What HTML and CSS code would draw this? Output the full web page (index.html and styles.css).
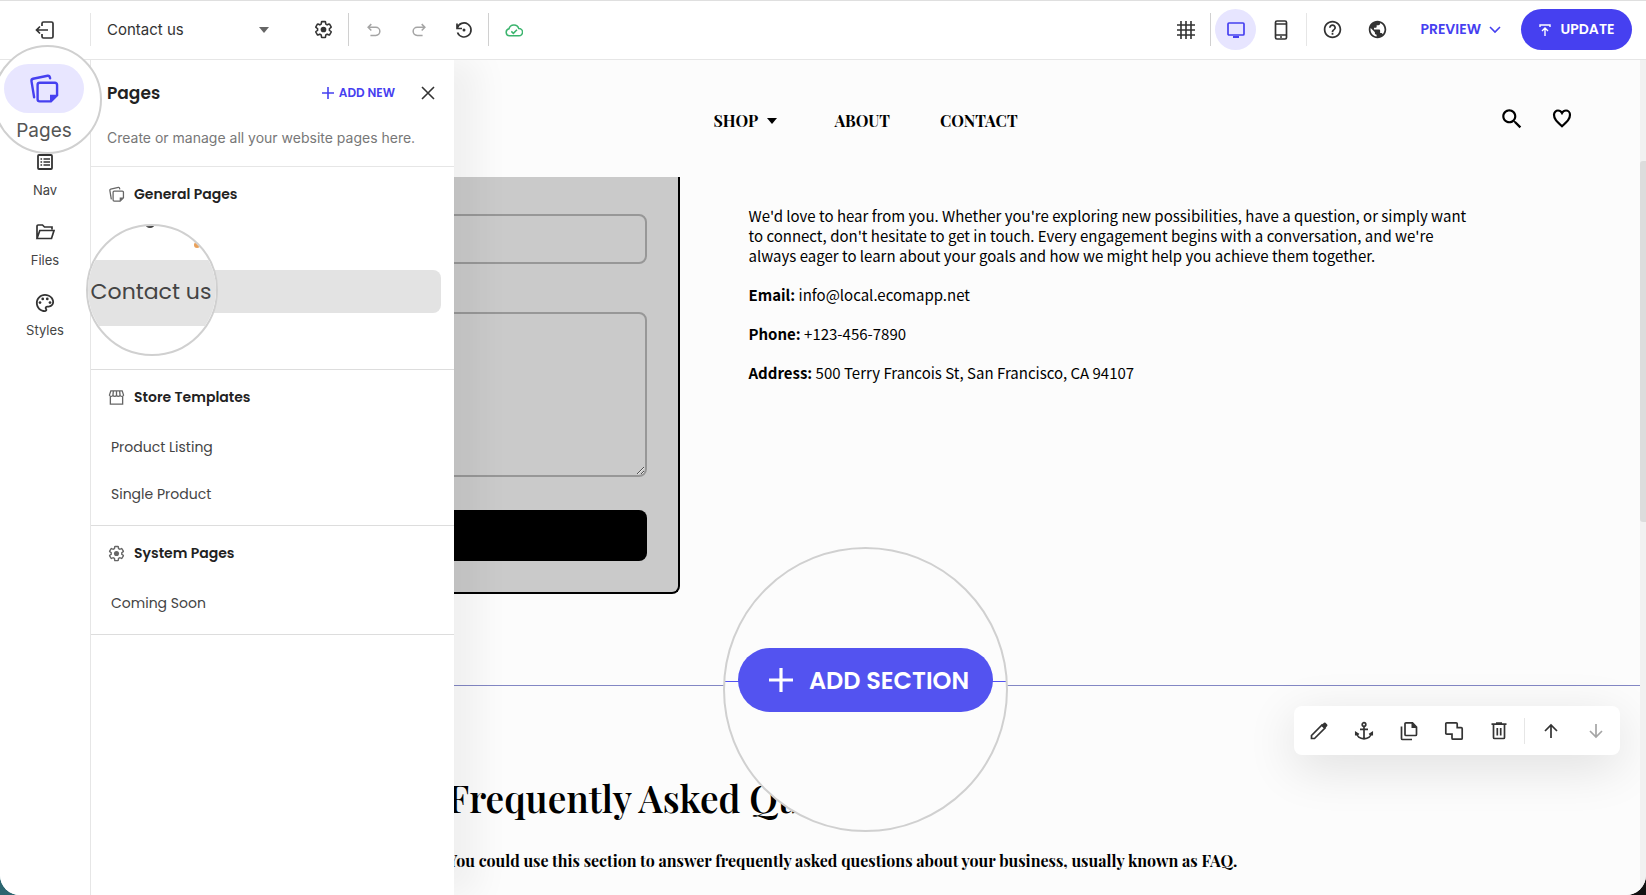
FILE: index.html
```html
<!DOCTYPE html>
<html lang="en">
<head>
  <meta charset="UTF-8" />
  <meta name="viewport" content="width=device-width, initial-scale=1.0"/>
  <title>Website editor</title>
  <link rel="stylesheet" href="styles.css">
</head>
<body>

  <!-- Shared icons -->
  <svg class="sprite" aria-hidden="true">
    <symbol id="i-pages" viewBox="0 0 24 24">
      <path d="M4.600 18.200L2.600 6.100Q2.400 4.700 3.800 4.300L14.700 2.100Q16.200 1.900 16.600 3.900" fill="none" stroke="currentColor" stroke-width="1.800" stroke-linecap="round"/>
      <path d="M8.800 7.300h11.400a1.600 1.600 0 0 1 1.600 1.600v7.800l-4.600 4.600H8.800a1.600 1.600 0 0 1-1.600-1.600V8.900a1.600 1.600 0 0 1 1.600-1.600z" fill="none" stroke="currentColor" stroke-width="1.800"/>
      <path d="M16.500 22v-5.700h5.900z" fill="currentColor"/>
    </symbol>
    <symbol id="i-gear" viewBox="0 0 24 24">
      <path fill="none" stroke="currentColor" stroke-width="2" d="M19.430 12.980c.04-.32.07-.64.07-.98 0-.34-.03-.66-.07-.98l2.110-1.650c.19-.15.24-.42.12-.64l-2-3.460c-.09-.16-.26-.25-.44-.25-.06 0-.12.01-.17.03l-2.490 1c-.52-.4-1.080-.73-1.690-.98l-.38-2.650C14.460 2.180 14.250 2 14 2h-4c-.25 0-.46.18-.49.42l-.38 2.650c-.61.25-1.170.59-1.690.98l-2.490-1c-.06-.02-.12-.03-.18-.03-.17 0-.34.09-.43.25l-2 3.460c-.13.22-.07.49.12.64l2.110 1.650c-.04.32-.07.65-.07.98 0 .33.03.66.07.98l-2.110 1.650c-.19.15-.24.42-.12.64l2 3.460c.09.16.26.25.44.25.06 0 .12-.01.17-.03l2.490-1c.52.4 1.080.73 1.690.98l.38 2.650c.03.24.24.42.49.42h4c.25 0 .46-.18.49-.42l.38-2.650c.61-.25 1.170-.59 1.690-.98l2.490 1c.06.02.12.03.18.03.17 0 .34-.09.43-.25l2-3.460c.12-.22.07-.49-.12-.64l-2.110-1.650z"/>
      <circle cx="12" cy="12" r="3.600" fill="currentColor"/>
    </symbol>
    <symbol id="i-undo" viewBox="0 0 20 20">
      <path d="M7 3.500L3.500 7L7 10.500M4 7h8a4.500 4.500 0 0 1 0 9H6" fill="none" stroke="currentColor" stroke-width="1.700"/>
    </symbol>
    <symbol id="i-plus" viewBox="0 0 14 14">
      <path d="M7 1v12M1 7h12" fill="none" stroke="currentColor" stroke-width="1.600"/>
    </symbol>
    <symbol id="i-arrow" viewBox="0 0 20 20">
      <path d="M10 17V4M4 10l6-6l6 6" fill="none" stroke="currentColor" stroke-width="1.700"/>
    </symbol>
  </svg>

  <div class="app">

    <!-- Top bar -->
    <header class="topbar">
      <div class="exit-cell">
        <button class="icon-button" aria-label="Exit editor">
          <svg width="20" height="20" viewBox="0 0 20 20" fill="none" stroke="currentColor" stroke-width="1.700"><path d="M7 6V3.500Q7 2 8.500 2h8Q18 2 18 3.500v13q0 1.500-1.500 1.500h-8Q7 18 7 16.500V14M13 10H1.500M5 6.500L1.500 10l3.500 3.500"/></svg>
        </button>
      </div>
      <div class="page-picker">
        <select aria-label="Current page">
          <option>Contact us</option>
          <option>Home</option>
        </select>
        <svg class="caret" width="10" height="6" viewBox="0 0 10 6"><path d="M0 0h10L5 6z" fill="currentColor"/></svg>
      </div>
      <button class="icon-button" aria-label="Settings"><svg width="19" height="19"><use href="#i-gear"/></svg></button>
      <span class="divider"></span>
      <button class="icon-button faded" aria-label="Undo"><svg width="18" height="18"><use href="#i-undo"/></svg></button>
      <button class="icon-button faded flipped" aria-label="Redo"><svg width="18" height="18"><use href="#i-undo"/></svg></button>
      <button class="icon-button" aria-label="History">
        <svg width="20" height="20" viewBox="0 0 20 20" fill="none" stroke="currentColor" stroke-width="1.700"><path d="M3 3.500v5h5M3.300 8A7 7 0 1 1 3.500 12.500"/><circle cx="10" cy="10" r="1.500" fill="currentColor" stroke="none"/></svg>
      </button>
      <span class="divider"></span>
      <span class="icon-button saved">
        <svg width="18" height="18" viewBox="0 0 20 20" fill="none" stroke="currentColor" stroke-width="1.700"><path d="M5 16.500a4 4 0 0 1-.5-7.900A5.600 5.600 0 0 1 15.300 8.300a4.100 4.100 0 0 1 .2 8.200zM7 11.500l2.300 2.200l4-4"/></svg>
      </span>

      <div class="topbar-right">
        <button class="icon-button" aria-label="Grid">
          <svg width="20" height="20" viewBox="0 0 20 20" stroke="currentColor" stroke-width="1.600"><path d="M5 1v18M10 1v18M15 1v18M1 5h18M1 10h18M1 15h18"/></svg>
        </button>
        <span class="divider"></span>
        <button class="icon-button active" aria-label="Desktop view">
          <svg width="20" height="20" viewBox="0 0 20 20" fill="none" stroke="currentColor" stroke-width="1.700"><rect x="2" y="3" width="16" height="12" rx="1"/><path d="M7 17h6" stroke-width="2.200"/></svg>
        </button>
        <button class="icon-button" aria-label="Mobile view">
          <svg width="20" height="20" viewBox="0 0 20 20" fill="none" stroke="currentColor" stroke-width="1.700"><rect x="4.500" y="1" width="11" height="18" rx="1.500"/><path d="M4.500 4h11M4.500 15h11"/><path d="M9 17h2"/></svg>
        </button>
        <span class="divider light"></span>
        <button class="icon-button" aria-label="Help">
          <svg width="21" height="21" viewBox="0 0 24 24" fill="currentColor"><path d="M11 18h2v-2h-2v2zm1-16C6.480 2 2 6.480 2 12s4.480 10 10 10 10-4.480 10-10S17.520 2 12 2zm0 18c-4.410 0-8-3.590-8-8s3.590-8 8-8 8 3.590 8 8-3.590 8-8 8zm0-14c-2.210 0-4 1.790-4 4h2c0-1.100.9-2 2-2s2 .9 2 2c0 2-3 1.750-3 5h2c0-2.250 3-2.500 3-5 0-2.210-1.790-4-4-4z"/></svg>
        </button>
        <button class="icon-button" aria-label="Language">
          <svg width="21" height="21" viewBox="0 0 24 24" fill="currentColor"><path d="M12 2C6.480 2 2 6.480 2 12s4.480 10 10 10 10-4.480 10-10S17.520 2 12 2zm-1 17.930c-3.950-.49-7-3.850-7-7.930 0-.62.08-1.210.21-1.790L9 15v1c0 1.100.9 2 2 2v1.930zm6.900-2.540c-.26-.81-1-1.390-1.900-1.390h-1v-3c0-.55-.45-1-1-1H8v-2h2c.55 0 1-.45 1-1V7h2c1.100 0 2-.9 2-2v-.41c2.930 1.190 5 4.060 5 7.410 0 2.080-.8 3.970-2.100 5.390z"/></svg>
        </button>
        <button class="preview-button">PREVIEW
          <svg width="12" height="8" viewBox="0 0 12 8" fill="none" stroke="currentColor" stroke-width="1.600"><path d="M1 1l5 5l5-5"/></svg>
        </button>
        <button class="update-button">
          <svg width="12" height="12" viewBox="0 0 12 12" fill="none" stroke="currentColor" stroke-width="1.400"><path d="M1 3V1h10v2M6 12V4M3 7l3-3l3 3"/></svg>
          UPDATE
        </button>
      </div>
    </header>

    <div class="workspace">

      <!-- Left navigation -->
      <nav class="side-nav">
        <div class="lens pages-lens">
          <a class="pages-link" href="#pages">
            <span class="pill"><svg width="32" height="32"><use href="#i-pages"/></svg></span>
            Pages
          </a>
        </div>
        <a class="side-link" href="#nav">
          <svg width="18" height="18" viewBox="0 0 18 18" fill="none" stroke="currentColor" stroke-width="1.800"><rect x="2" y="2" width="14" height="14" rx="1"/><path d="M7.500 6H14M7.500 9H14M7.500 12H14M4.500 6h1.600M4.500 9h1.600M4.500 12h1.600" stroke-width="1.500"/></svg>
          Nav
        </a>
        <a class="side-link" href="#files">
          <svg width="20" height="18" viewBox="0 0 20 18" fill="none" stroke="currentColor" stroke-width="1.700"><path d="M2 15V3.200Q2 2 3.200 2H7.500l2 2H17v2.500M2 15.500L4.800 7.500H19L16.500 15.500z"/></svg>
          Files
        </a>
        <a class="side-link" href="#styles">
          <svg width="20" height="20" viewBox="1 1 22 22" fill="currentColor"><path d="M12 2C6.490 2 2 6.490 2 12s4.490 10 10 10c1.380 0 2.500-1.120 2.500-2.500 0-.61-.23-1.200-.64-1.670-.08-.1-.13-.21-.13-.33 0-.28.22-.5.5-.5H16c3.310 0 6-2.690 6-6 0-4.960-4.490-9-10-9zm4 13h-1.770c-1.380 0-2.500 1.120-2.500 2.500 0 .61.22 1.190.63 1.650.06.07.14.19.14.35 0 .28-.22.5-.5.5-4.410 0-8-3.590-8-8s3.590-8 8-8 8 3.140 8 7c0 2.210-1.790 4-4 4z"/><circle cx="6.500" cy="11.500" r="1.500"/><circle cx="9.500" cy="7.500" r="1.500"/><circle cx="14.500" cy="7.500" r="1.500"/><circle cx="17.500" cy="11.500" r="1.500"/></svg>
          Styles
        </a>
      </nav>

      <!-- Pages panel -->
      <aside class="panel">
        <div class="panel-head">
          <div class="panel-title">
            <h2>Pages</h2>
            <button class="add-new"><svg width="14" height="14"><use href="#i-plus"/></svg>ADD NEW</button>
            <button class="close" aria-label="Close">
              <svg width="14" height="14" viewBox="0 0 14 14" stroke="currentColor" stroke-width="1.600"><path d="M1 1l12 12M13 1L1 13"/></svg>
            </button>
          </div>
          <p>Create or manage all your website pages here.</p>
        </div>

        <section class="page-group">
          <h3><svg width="17" height="17"><use href="#i-pages"/></svg>General Pages</h3>
          <a class="page-row" href="#home" aria-label="Home"></a>
          <a class="page-row selected" href="#contact" aria-label="Contact us"></a>
          <a class="page-row" href="#blog" aria-label="Blog"></a>
          <div class="lens row-lens">
            <span class="lens-mark"></span>
            <span class="lens-dot"></span>
            <span class="lens-row">Contact us</span>
          </div>
        </section>

        <section class="page-group">
          <h3>
            <svg width="17" height="17" viewBox="0 0 18 18" fill="none" stroke="currentColor" stroke-width="1.400"><path d="M3 2h12l1.500 4.500a2 2 0 0 1-3.800 0a2 2 0 0 1-3.700 0a2 2 0 0 1-3.700 0a2 2 0 0 1-3.800 0zM2.500 8v8h13V8M5.700 2l-.5 5M9 2v5M12.300 2l.5 5"/></svg>
            Store Templates
          </h3>
          <a class="page-row" href="#listing">Product Listing</a>
          <a class="page-row" href="#single">Single Product</a>
        </section>

        <section class="page-group">
          <h3><svg width="17" height="17"><use href="#i-gear"/></svg>System Pages</h3>
          <a class="page-row" href="#soon">Coming Soon</a>
        </section>
      </aside>

      <!-- Site canvas -->
      <main class="canvas">
        <div class="site-header">
          <nav class="site-nav">
            <a href="#shop">SHOP <svg width="10" height="6" viewBox="0 0 10 6"><path d="M0 0h10L5 6z" fill="currentColor"/></svg></a>
            <a href="#about">ABOUT</a>
            <a href="#contact">CONTACT</a>
          </nav>
          <div class="site-icons">
            <button aria-label="Search"><svg width="26" height="26" viewBox="0 0 24 24" fill="currentColor"><path d="M15.500 14h-.79l-.28-.27C15.410 12.590 16 11.110 16 9.500 16 5.910 13.090 3 9.500 3S3 5.910 3 9.500 5.910 16 9.500 16c1.610 0 3.090-.59 4.230-1.570l.27.28v.79l5 4.990L20.490 19l-4.990-5zm-6 0C7.010 14 5 11.990 5 9.500S7.010 5 9.500 5 14 7.010 14 9.500 11.990 14 9.500 14z"/></svg></button>
            <button aria-label="Wishlist"><svg width="24" height="24" viewBox="0 0 24 24" fill="none" stroke="currentColor" stroke-width="2.200"><path d="M12 20.200C6 14.800 4 12.500 4 8.800C4 6.200 6 4.500 8 4.500c1.700 0 3.200 1 4 2.500c.8-1.500 2.300-2.500 4-2.500c2 0 4 1.700 4 4.300c0 3.700-2 6-8 11.400z"/></svg></button>
          </div>
        </div>

        <section class="contact">
          <form class="contact-form">
            <input type="text" aria-label="Email">
            <textarea aria-label="Message"></textarea>
            <button type="button" aria-label="Send"></button>
          </form>
          <div class="contact-text">
            <p>We'd love to hear from you. Whether you're exploring new possibilities, have a question, or simply want to connect, don't hesitate to get in touch. Every engagement begins with a conversation, and we're always eager to learn about your goals and how we might help you achieve them together.</p>
            <p><b>Email:</b> info@local.ecomapp.net</p>
            <p><b>Phone:</b> +123-456-7890</p>
            <p><b>Address:</b> 500 Terry Francois St, San Francisco, CA 94107</p>
          </div>
        </section>

        <section class="faq">
          <div class="faq-inner">
            <h1>Frequently Asked Questions</h1>
            <p>You could use this section to answer frequently asked questions about your business, usually known as FAQ.</p>
          </div>

          <div class="section-tools">
            <button aria-label="Edit"><svg width="20" height="20" viewBox="0 0 20 20" fill="none" stroke="currentColor" stroke-width="1.700"><path d="M2.500 17.500v-3L13 4l3 3L5.500 17.500z"/><path d="M12 4.500L15 1.800q.8-.6 1.500 0L18.200 3.500q.6.800 0 1.500L15.500 8z" fill="currentColor" stroke="none"/></svg></button>
            <button aria-label="Anchor"><svg width="20" height="20" viewBox="0 0 20 20" fill="none" stroke="currentColor" stroke-width="1.700"><circle cx="10" cy="3.500" r="1.800"/><path d="M10 5.300V18M6 8.300h8M2.500 11.500c0 4 3.500 6.300 7.500 6.300s7.500-2.300 7.500-6.300M1.800 14.500V11.500l3 2M18.200 14.500V11.500l-3 2"/></svg></button>
            <button aria-label="Copy"><svg width="20" height="20" viewBox="0 0 20 20" fill="none" stroke="currentColor" stroke-width="1.700"><path d="M7 1.800h6.500L17.500 6v7.500q0 1-1 1H7q-1 0-1-1V2.800q0-1 1-1zM2.500 5.500v12q0 1 1 1H13"/><path d="M12.500 1v6H18z" fill="currentColor" stroke="none"/></svg></button>
            <button aria-label="Duplicate"><svg width="20" height="20" viewBox="0 0 20 20" fill="none" stroke="currentColor" stroke-width="1.700"><path d="M2.800 1.800h9.400q1 0 1 1v3.900h4q1 0 1 1v9.500q0 1-1 1H9q-1 0-1-1v-4H2.800q-1 0-1-1V2.800q0-1 1-1z"/></svg></button>
            <button aria-label="Delete"><svg width="20" height="20" viewBox="0 0 20 20" fill="none" stroke="currentColor" stroke-width="1.700"><path d="M4.500 4v12.500q0 1 1 1h9q1 0 1-1V4M2.500 3.200h15M7 2h6M8.300 7v7.500M11.700 7v7.500"/></svg></button>
            <span class="divider light"></span>
            <button aria-label="Move up"><svg width="20" height="20"><use href="#i-arrow"/></svg></button>
            <button class="faded down" aria-label="Move down"><svg width="20" height="20"><use href="#i-arrow"/></svg></button>
          </div>

          <div class="lens section-lens">
            <button class="add-section"><svg width="28" height="28"><use href="#i-plus"/></svg>ADD SECTION</button>
          </div>
        </section>
      </main>
      <div class="scrollbar"><div class="thumb"></div></div>
    </div>
  </div>
</body>
</html>
```
FILE: styles.css
```css
* {
  box-sizing: border-box;
}

body {
  margin: 0;
  font-family: Inter, sans-serif;
  color: #333;
  background: linear-gradient(90deg, #2c6670, #111);
}

button {
  display: flex;
  align-items: center;
  justify-content: center;
  padding: 0;
  border: none;
  background: none;
  color: inherit;
  font-family: inherit;
  cursor: pointer;
}

a {
  color: inherit;
  text-decoration: none;
}

h1, h2, h3, p {
  margin: 0;
}

.sprite {
  position: absolute;
  width: 0;
  height: 0;
}

.app {
  display: flex;
  flex-direction: column;
  height: 100vh;
  overflow: hidden;
  background: #fff;
  border-top: 1px solid #dfdfdf;
  border-radius: 0 0 20px 20px;
}

/* Top bar */
.topbar {
  position: relative;
  z-index: 2;
  display: flex;
  align-items: center;
  flex: none;
  height: 59px;
  padding: 0 14px 1px 0;
  background: #fff;
  border-bottom: 1px solid #e6e6e6;
}

.exit-cell {
  display: flex;
  justify-content: center;
  width: 91px;
  border-right: 1px solid #e6e6e6;
}

.icon-button {
  display: flex;
  align-items: center;
  justify-content: center;
  width: 41px;
  height: 41px;
  margin: 0 2px;
  border-radius: 50%;
}

.exit-cell .icon-button {
  height: 33px;
}

.page-picker {
  position: relative;
  width: 210px;
}

.page-picker select {
  width: 100%;
  padding: 8px 16px;
  appearance: none;
  border: none;
  background: none;
  color: #333;
  font-family: inherit;
  font-size: 15px;
}

.page-picker .caret {
  position: absolute;
  right: 32px;
  top: 50%;
  margin-top: -3px;
  color: #666;
  pointer-events: none;
}

.divider {
  width: 1px;
  height: 33px;
  margin: 0 2px;
  background: #d0d0d0;
}

.divider.light {
  margin: 0 3px;
  background: #e6e6e6;
}

.faded {
  color: #a5a5a5;
}

.flipped svg {
  transform: scaleX(-1);
}

.down svg {
  transform: scaleY(-1);
}

.saved {
  color: #3cb46e;
}

.topbar-right {
  display: flex;
  align-items: center;
  margin-left: auto;
}

.active {
  background: #e7e5ff;
  color: #4640f0;
}

.preview-button,
.update-button,
.add-new,
.add-section,
.panel h2,
.page-group {
  font-family: Poppins, Inter, sans-serif;
}

.preview-button {
  gap: 8px;
  margin: 0 20px;
  color: #4640f0;
  font-size: 14px;
  font-weight: 600;
}

.update-button {
  gap: 10px;
  width: 111px;
  height: 41px;
  border-radius: 21px;
  background: #4640f0;
  color: #fff;
  font-size: 14px;
  font-weight: 600;
}

/* Left navigation */
.workspace {
  position: relative;
  display: flex;
  flex: 1;
  min-height: 0;
}

.side-nav {
  position: relative;
  display: flex;
  flex-direction: column;
  gap: 25px;
  flex: none;
  width: 91px;
  padding-top: 93px;
  background: #fff;
  border-right: 1px solid #e6e6e6;
}

.side-link {
  display: flex;
  flex-direction: column;
  align-items: center;
  justify-content: space-between;
  height: 45px;
  font-size: 13px;
  line-height: 16px;
  color: #444;
}

.side-link svg {
  color: #333;
}

/* Magnifier circles lie over the screen */
.lens {
  position: absolute;
  overflow: hidden;
  border: 2px solid #d0d0d0;
  border-radius: 50%;
  background: #fff;
}

.pages-lens {
  z-index: 3;
  left: -7px;
  top: -15px;
  width: 109px;
  height: 109px;
}

.pages-link {
  display: flex;
  flex-direction: column;
  align-items: center;
  gap: 6px;
  padding: 17px 7px 0 0;
  font-size: 19px;
  line-height: 24px;
  color: #555;
}

.pill {
  display: flex;
  align-items: center;
  justify-content: center;
  width: 80px;
  height: 49px;
  border-radius: 25px;
  background: #e8e6ff;
  color: #4640f0;
}

/* Pages panel */
.panel {
  position: absolute;
  z-index: 1;
  left: 91px;
  top: 0;
  bottom: 0;
  width: 363px;
  background: #fff;
  box-shadow: 24px 0 32px rgba(0, 0, 0, 0.05);
}

.panel-head {
  padding: 20px 16px;
  height: 107px;
  border-bottom: 1px solid #e6e6e6;
}

.panel-title {
  display: flex;
  align-items: center;
  height: 26px;
  margin-bottom: 21px;
}

.panel-title h2 {
  margin-right: auto;
  font-size: 17px;
  font-weight: 600;
  color: #222;
}

.add-new {
  gap: 4px;
  color: #4640f0;
  font-size: 12px;
  font-weight: 600;
}

.close {
  width: 20px;
  margin: 0 0 0 23px;
}

.panel-head p {
  font-size: 14px;
  line-height: 22px;
  color: #777;
}

.page-group {
  position: relative;
  display: flex;
  flex-direction: column;
  gap: 4px;
  padding: 14px 13px 9px 12px;
  border-bottom: 1px solid #ddd;
}

.page-group h3 {
  display: flex;
  align-items: center;
  gap: 9px;
  height: 26px;
  margin: 0 0 12px;
  padding-left: 5px;
  font-size: 14px;
  font-weight: 600;
  color: #222;
}

.page-group h3 svg {
  color: #666;
}

.page-row {
  display: flex;
  align-items: center;
  height: 43px;
  padding: 0 8px;
  border-radius: 8px;
  font-size: 14px;
  color: #444;
}

.selected {
  background: #e3e3e3;
}

.row-lens {
  left: -5px;
  top: 57px;
  width: 132px;
  height: 132px;
}

.lens-row {
  display: flex;
  align-items: center;
  justify-content: center;
  height: 66px;
  margin-top: 34px;
  padding: 0 2px 4px 0;
  background: #e3e3e3;
  font-size: 22px;
  white-space: nowrap;
  color: #444;
}

.lens-dot {
  position: absolute;
  right: 16px;
  top: 16px;
  width: 6px;
  height: 6px;
  border-radius: 50%;
  background: #e8a05a;
}

.lens-mark {
  position: absolute;
  left: 57px;
  top: -7px;
  width: 10px;
  height: 9px;
  border: 2px solid #444;
  border-radius: 50%;
}

/* Site canvas */
.canvas {
  flex: 1;
  min-width: 0;
  overflow: hidden;
  background: #fcfcfc;
  color: #000;
}

.site-header {
  display: grid;
  grid-template-columns: 1fr auto 1fr;
  height: 117px;
  padding: 46px 66px 0;
  font-family: "Playfair Display", "Liberation Serif", serif;
}

.site-nav {
  grid-column: 2;
  display: flex;
  gap: 50px;
  height: 28px;
  align-items: center;
  font-size: 16px;
  font-weight: 700;
}

.site-nav svg {
  margin: 0 8px 3px 5px;
}

.site-icons {
  display: flex;
  justify-content: flex-end;
  align-items: flex-start;
  gap: 25px;
}

.contact {
  display: grid;
  grid-template-columns: 422px 1fr;
  align-items: start;
  gap: 69px;
  width: 100%;
  max-width: 1216px;
  height: 508px;
  margin: 0 auto;
}

.contact-form {
  display: flex;
  flex-direction: column;
  padding: 37px 31px 31px;
  border: 2px solid #000;
  border-top: none;
  border-radius: 0 0 8px 8px;
  background: #cacaca;
}

.contact-form input,
.contact-form textarea {
  width: 100%;
  height: 50px;
  margin: 0 0 48px;
  border: 2px solid #979797;
  border-radius: 8px;
  background: transparent;
}

.contact-form textarea {
  height: 165px;
  margin-bottom: 33px;
}

.contact-form button {
  height: 51px;
  border-radius: 8px;
  background: #000;
}

.contact-text {
  padding-top: 29px;
  font-family: "Noto Sans CJK SC", sans-serif;
  font-size: 15px;
  line-height: 20px;
}

.contact-text p {
  margin-bottom: 19px;
}

/* Faq section */
.faq {
  position: relative;
  padding-top: 86px;
  border-top: 1px solid #8387c4;
  font-family: "Playfair Display", "Liberation Serif", serif;
}

.faq-inner {
  max-width: 836px;
  margin: 0 auto;
  white-space: nowrap;
}

.faq h1 {
  margin-bottom: 24px;
  font-size: 37px;
  line-height: 52px;
  font-weight: 600;
}

.faq p {
  font-size: 16px;
  line-height: 26px;
  font-weight: 700;
}

.section-tools {
  position: absolute;
  right: 20px;
  top: 20px;
  display: flex;
  align-items: center;
  height: 49px;
  padding: 0 2px;
  border-radius: 8px;
  background: #fff;
  color: #333;
  box-shadow: 0 12px 50px rgba(0, 0, 0, 0.12);
}

.section-tools button {
  width: 45px;
  height: 41px;
}

.section-tools .divider {
  height: 26px;
}

.section-tools .faded {
  color: #a5a5a5;
}

.section-lens {
  left: 50%;
  top: -139px;
  width: 285px;
  height: 285px;
  margin-left: -143px;
  background: linear-gradient(#5353f0, #5353f0) 0 132px / 100% 1px no-repeat #fcfcfc;
}

.add-section {
  gap: 14px;
  width: 255px;
  height: 64px;
  margin: 99px auto 0;
  padding-left: 6px;
  border-radius: 32px;
  background: #5353f0;
  color: #fff;
  font-size: 24px;
  font-weight: 600;
}

.scrollbar {
  flex: none;
  width: 6px;
  padding-top: 101px;
  background: #f1f1f1;
}

.thumb {
  height: 361px;
  border-radius: 3px 0 0 3px;
  background: #dcdcdc;
}
```
